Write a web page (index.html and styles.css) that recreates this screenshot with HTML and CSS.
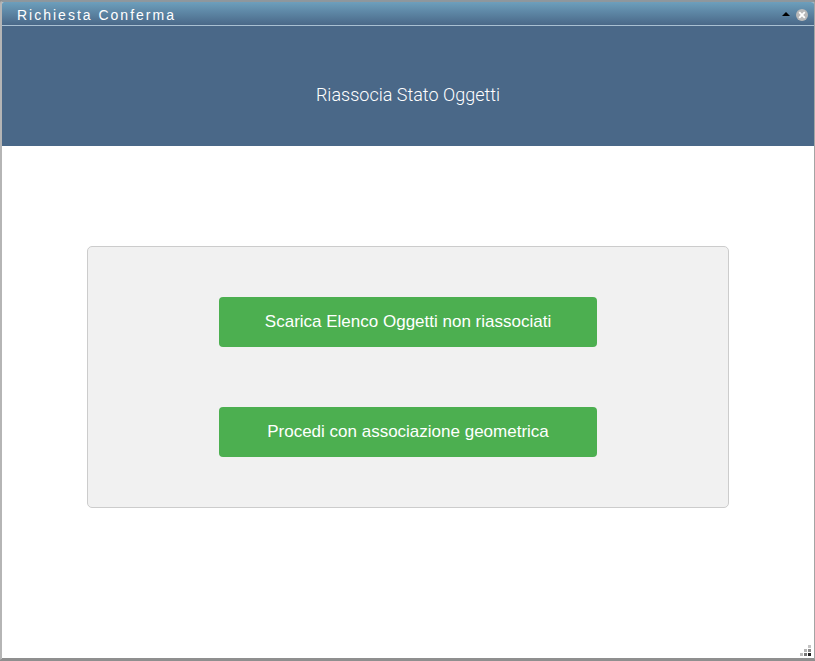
FILE: index.html
```html
<!DOCTYPE html>
<html lang="en">
<head>
    <meta charset="UTF-8">
    <title>Richiesta Conferma</title>
    <link rel="stylesheet" href="styles.css">
</head>
<body>
<div class="window">
    <div class="titlebar">
        <span class="title">Richiesta Conferma</span>
        <div class="controls">
            <span class="collapse"></span>
            <span class="close">
                <svg width="12" height="12" viewBox="0 0 12 12">
                    <circle cx="6" cy="6" r="6" fill="#b9b9b9"/>
                    <path d="M3.2 3.2l5.6 5.6M8.8 3.2l-5.6 5.6" stroke="#fff" stroke-width="1.8"/>
                </svg>
            </span>
        </div>
    </div>
    <div class="header">Riassocia Stato Oggetti</div>
    <div class="content">
        <div class="panel">
            <button type="button" class="btn">Scarica Elenco Oggetti non riassociati</button>
            <button type="button" class="btn">Procedi con associazione geometrica</button>
        </div>
    </div>
    <svg class="grip" width="11" height="11" viewBox="0 0 11 11">
        <rect x="8" y="0" width="3" height="3" fill="#c4c4c4"/>
        <rect x="4" y="4" width="3" height="3" fill="#b4b4b4"/>
        <rect x="8" y="4" width="3" height="3" fill="#8a8a8a"/>
        <rect x="0" y="8" width="3" height="3" fill="#bcbcbc"/>
        <rect x="4" y="8" width="3" height="3" fill="#777"/>
        <rect x="8" y="8" width="3" height="3" fill="#222"/>
    </svg>
</div>
</body>
</html>
```

FILE: styles.css
```css
html, body {
    margin: 0;
    height: 100%;
    overflow: hidden;
    background: #8d8d8d;
}

.window {
    position: relative;
    display: flex;
    flex-direction: column;
    box-sizing: border-box;
    height: 661px;
    border-left: 2px solid #b5b5b5;
    border-right: 1px solid #a4a4a4;
    border-bottom: 3px solid #8f8f8f;
    border-top: 2px solid #8e979d;
    border-radius: 4px 4px 3px 3px;
    background: #fff;
    overflow: hidden;
}

.titlebar {
    display: flex;
    align-items: center;
    justify-content: space-between;
    height: 20px;
    padding: 3px 6px 0 15px;
    border-bottom: 1px solid #a9c0d2;
    background: linear-gradient(to bottom, #6d9fbc, #4a6888);
    flex-shrink: 0;
}

.title {
    font-family: "Liberation Sans", Arial, sans-serif;
    font-size: 14px;
    letter-spacing: 2px;
    color: #fff;
}

.controls {
    display: flex;
    align-items: center;
    gap: 6px;
}

.collapse {
    width: 0;
    height: 0;
    border-left: 4px solid transparent;
    border-right: 4px solid transparent;
    border-bottom: 4px solid #000;
    margin-bottom: 2px;
}

.close {
    display: flex;
}

.header {
    display: flex;
    align-items: center;
    justify-content: center;
    box-sizing: border-box;
    height: 120px;
    padding-top: 16px;
    background: #4a6888;
    color: #fff;
    font-family: Roboto, sans-serif;
    font-weight: 300;
    font-size: 18px;
    flex-shrink: 0;
}

.content {
    padding-top: 100px;
    display: flex;
    justify-content: center;
}

.panel {
    display: flex;
    flex-direction: column;
    align-items: center;
    gap: 60px;
    box-sizing: border-box;
    width: 642px;
    height: 262px;
    padding-top: 50px;
    border: 1px solid #ccc;
    border-radius: 5px;
    background: #f1f1f1;
}

.btn {
    width: 378px;
    height: 50px;
    border: 0;
    border-radius: 4px;
    background: #4caf50;
    color: #fff;
    font-family: "Liberation Sans", Arial, sans-serif;
    font-size: 17px;
}

.grip {
    position: absolute;
    right: 3px;
    bottom: 2px;
}
```
